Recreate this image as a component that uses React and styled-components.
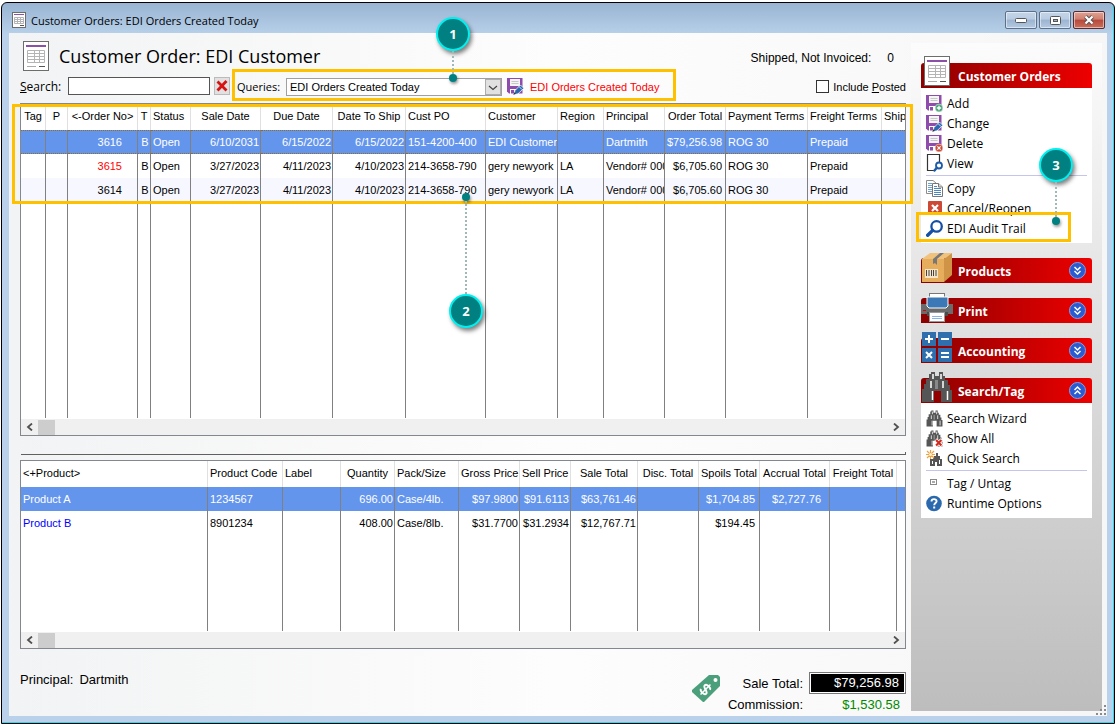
import { useState } from 'react';
import styled, { createGlobalStyle, css } from 'styled-components';


const GlobalStyle = createGlobalStyle`
  * {
    box-sizing: border-box;
  }

  body {
    margin: 0;
    background: white;
    font-family: "Liberation Sans", Arial, sans-serif;
    font-size: 11px;
    color: black;
  }

  button, input, select {
    font: inherit;
    color: inherit;
    padding: 0;
    margin: 0;
  }

  svg {
    display: block;
    flex: none;
  }
`;

const Window = styled.div`
  position: relative;
  display: flex;
  flex-direction: column;
  min-height: calc(100vh - 2px);
  margin: 2px 1px 0 1px;
  padding: 0 7px 7px 7px;
  border: 1px solid black;
  border-radius: 6px 6px 0 0;
  background: linear-gradient(to bottom, #98b4d2 0, #b9d1ea 32px, #b9d1ea 100%);
  box-shadow: inset -1px -1px 0 #35d6ee;
`;

const TitleBar = styled.header`
  display: flex;
  align-items: center;
  gap: 5px;
  height: 30px;
  padding: 4px 2px 0 3px;
  font-family: "Open Sans", "Noto Sans", sans-serif;
`;

const WindowTitle = styled.span`
  flex: 1;
`;

const WindowButtons = styled.div`
  display: flex;
  gap: 2px;
`;

const WindowButton = styled.button`
  display: flex;
  align-items: center;
  justify-content: center;
  width: 32px;
  height: 18px;
  border: 1px solid ${props => props.$close ? '#5b2a2c' : '#5f6f85'};
  border-radius: 2px;
  box-shadow: inset 0 0 0 1px rgba(255, 255, 255, 0.5);
  background: ${props => props.$close
    ? 'linear-gradient(#e0a191 0, #d08070 45%, #b8483a 50%, #c9705a 100%)'
    : 'linear-gradient(#c5d5e8 0, #b8cce2 45%, #9cb4cf 50%, #b3cae3 100%)'};
`;

const Client = styled.div`
  flex: 1;
  display: flex;
  padding: 10px 5px 5px 11px;
  background: linear-gradient(to right, #f2f3f4 0, #fdfdfd 50%, #f6f6f6 100%);
`;

const Main = styled.main`
  flex: 1;
  min-width: 0;
  display: flex;
  flex-direction: column;
  padding-right: 5px;
`;

const Heading = styled.div`
  display: flex;
  align-items: center;
  gap: 10px;
  height: 26px;
  padding: 0 12px 0 3px;

  h1 {
    flex: 1;
    margin: 0;
    font-family: "Open Sans", "Noto Sans", sans-serif;
    font-size: 18px;
    font-weight: 400;
  }
`;

const Shipped = styled.div`
  display: flex;
  gap: 16px;
  padding-top: 4px;
  font-size: 12px;
`;

const Toolbar = styled.div`
  display: flex;
  align-items: center;
  height: 32px;
  margin-bottom: 2px;
`;

const SearchForm = styled.div`
  display: flex;
  align-items: center;
  gap: 4px;
  padding-top: 2px;

  label {
    width: 44px;
    font-family: "Open Sans", "Noto Sans", sans-serif;
    font-size: 12px;
  }

  input {
    width: 142px;
    height: 18px;
    padding: 0 3px;
    border: 1px solid #555;
    background: white;
  }
`;

const ClearButton = styled.button`
  display: flex;
  align-items: center;
  justify-content: center;
  width: 16px;
  height: 18px;
  border: 1px solid #bbb;
  background: #e1e1e1;
`;

const QueryBox = styled.div`
  display: flex;
  align-items: center;
  height: 32px;
  width: 444px;
  margin-left: 2px;
  padding: 3px 2px 0 2px;
  border: 3px solid #ffc000;

  label {
    width: 49px;
    font-family: "Open Sans", "Noto Sans", sans-serif;
  }
`;

const SelectWrap = styled.div`
  position: relative;
  width: 216px;
  margin-right: 5px;

  select {
    width: 100%;
    height: 18px;
    padding: 0 18px 0 3px;
    border: 1px solid #a0a0a0;
    border-radius: 0;
    background: white;
    appearance: none;
  }

  svg {
    position: absolute;
    top: 1px;
    right: 1px;
    pointer-events: none;
  }
`;

const ActiveQuery = styled.span`
  margin-left: 6px;
  color: #f00;
`;

const Posted = styled.label`
  display: flex;
  align-items: center;
  gap: 4px;
  margin-left: auto;
  padding-top: 3px;

  input {
    appearance: none;
    width: 13px;
    height: 13px;
    border: 1px solid #333;
    background: white;
  }
`;

const GridFrame = styled.section`
  position: relative;
  display: flex;
  flex-direction: column;
  border: 1px solid #828790;
  background: white;
  ${props => props.$grow ? css`flex: 1;` : css`height: 189px;`}
`;

const TableArea = styled.div`
  flex: 1;
  display: grid;
  overflow: hidden;
  margin-bottom: 1px;
`;

const Table = styled.table`
  width: 100%;
  height: 100%;
  table-layout: fixed;
  border-collapse: separate;
  border-spacing: 0;

  th, td {
    padding: 0 2px;
    overflow: hidden;
    white-space: nowrap;
    font-weight: 400;
    border-right: 1px solid #808080;
  }

  th {
    height: 26px;
    padding: 0 2px 2px 2px;
    border-right-color: #e0e0e0;
  }

  td {
    height: 24px;
  }

  th:last-child, td:last-child {
    padding-right: 0;
    border-right: none;
  }
`;

const HeadCell = styled.th`
  text-align: ${props => props.$align === 'left' ? 'left' : 'center'};
`;

const Row = styled.tr`
  background: ${props => props.$selected ? '#6495ed' : props.$tint ? '#f7f8ff' : 'white'};
  color: ${props => props.$selected ? 'white' : 'black'};

  td {
    ${props => props.$focus && css`
      border-top: 1px dotted #9a6b12;
      border-bottom: 1px dotted #9a6b12;
    `}
  }
`;

const Cell = styled.td`
  && {
    text-align: ${props => props.$align || 'left'};
    padding-right: ${props => props.$inset ?? 0}px;
    color: ${props => props.$color || 'inherit'};
  }
`;

const Filler = styled.tr`
  && td {
    height: auto;
  }
`;

const ScrollBar = styled.div`
  display: flex;
  align-items: center;
  height: 16px;
  background: #f0f0f0;

  button {
    display: flex;
    align-items: center;
    justify-content: center;
    width: 17px;
    height: 16px;
    border: none;
    background: transparent;
  }
`;

const Thumb = styled.div`
  width: 17px;
  height: 15px;
  margin-right: auto;
  background: #cdcdcd;
`;

const Splitter = styled.div`
  height: 3px;
  margin: 16px 0 5px 1px;
  border-right: 1px solid #606060;
  border-bottom: 1px solid #606060;
`;

const Footer = styled.footer`
  display: flex;
  justify-content: space-between;
  height: 62px;
  padding-top: 23px;
  font-size: 13px;
`;

const Principal = styled.div`
  display: flex;
  gap: 6px;
`;

const Totals = styled.dl`
  display: grid;
  grid-template-columns: auto auto 97px;
  column-gap: 6px;
  align-items: center;
  margin: 0;
  text-align: right;
  grid-template-rows: 22px 20px;

  svg {
    grid-row: 1 / 3;
    align-self: start;
    margin-top: 2px;
  }

  dt, dd {
    margin: 0;
  }
`;

const SaleTotal = styled.dd`
  height: 22px;
  padding: 2px 6px 0 0;
  border: 1px solid #777;
  box-shadow: inset 0 0 0 1px white;
  background: black;
  color: white;
`;

const Commission = styled.dd`
  padding-right: 6px;
  color: #008a00;
`;

const Sidebar = styled.aside`
  display: flex;
  flex-direction: column;
  gap: 15px;
  width: 191px;
  padding: 20px 10px;
  background: linear-gradient(to bottom, #fcfcfc 0, #d8d8d8 55%, #bdbdbd 100%);
  font-family: "Open Sans", "Noto Sans", sans-serif;
  font-size: 12px;
`;

const GroupHeader = styled.button`
  display: flex;
  align-items: flex-end;
  width: 100%;
  height: 25px;
  padding-right: 6px;
  border: none;
  border-radius: 3px 3px 0 0;
  background: linear-gradient(to right, #8b0000, #ee0000);
  color: white;
  font-weight: 700;
  text-align: left;
`;

const GroupTitle = styled.span`
  flex: 1;
  margin-left: 5px;
  line-height: 22px;
`;

const Chevron = styled.span`
  margin-bottom: 4px;
`;

const GroupList = styled.ul`
  margin: 0;
  padding: 5px;
  background: white;
  list-style: none;
`;

const Item = styled.li`
  ${props => props.$divided && css`
    margin-top: 2px;
    padding-top: 2px;
    border-top: 1px solid #c3c6ea;
  `}

  button {
    display: flex;
    align-items: center;
    gap: 4px;
    width: 100%;
    height: 20px;
    border: none;
    background: none;
    text-align: left;
  }
`;

const Highlight = styled.div`
  position: absolute;
  border: 3px solid #ffc000;
  pointer-events: none;
`;

const GridHighlight = styled(Highlight)`
  top: 0;
  left: -9px;
  right: -8px;
  height: 100px;
`;

const ItemHighlight = styled(Highlight)`
  left: -5px;
  top: 149px;
  width: 155px;
  height: 30px;
`;

const GroupBody = styled.div`
  position: relative;
`;

const Callout = styled.div`
  position: absolute;
  left: ${props => props.$x}px;
  top: ${props => props.$y}px;
  display: flex;
  flex-direction: ${props => props.$up ? 'column-reverse' : 'column'};
  align-items: center;
  width: 34px;
  pointer-events: none;
`;

const Bubble = styled.span`
  display: flex;
  align-items: center;
  justify-content: center;
  width: 34px;
  height: 34px;
  border: 2px solid #00f0f0;
  border-radius: 50%;
  background: #008080;
  box-shadow: 2px 3px 4px rgba(0, 0, 0, 0.5);
  color: white;
  font-family: "Open Sans", "Noto Sans", sans-serif;
  font-size: 13px;
  font-weight: 700;
`;

const Leader = styled.span`
  height: ${props => props.$length}px;
  border-left: 2px dotted #9fb8b8;
`;

const Dot = styled.span`
  width: 8px;
  height: 8px;
  border-radius: 50%;
  background: #008080;
  box-shadow: 1px 2px 3px rgba(0, 0, 0, 0.4);
`;

const Grip = styled.svg`
  position: absolute;
  right: 7px;
  bottom: 7px;
`;


// ---- icons ----

const OrderIcon = ({ width = 26, height = 30, viewBox = '0 0 26 30' }) => (
  <svg width={width} height={height} viewBox={viewBox}>
    <rect x=".5" y=".5" width="25" height="29" fill="#fff" stroke="#6d6d6d" />
    <rect x="3" y="4" width="20" height="2" fill="#8b50a8" />
    <path d="M4.500 9.500H21.500V21.500H4.500ZM4.500 12.500H21.500M4.500 15.500H21.500M4.500 18.500H21.500M11.500 9.500V21.500M16.500 9.500V21.500" fill="none" stroke="#b4b4b4" />
    <path d="M4 25.500H13" stroke="#aaa" />
    <path d="M16 25.500H22" stroke="#555" />
  </svg>
);

const SmallOrderIcon = () => (
  <svg width="14" height="16" viewBox="0 0 14 16">
    <rect x=".5" y=".5" width="13" height="15" fill="#fff" stroke="#6d6d6d" />
    <rect x="2" y="2" width="10" height="1" fill="#8b50a8" />
    <path d="M2.500 5.500H11.500V11.500H2.500ZM2.500 7.500H11.500M2.500 9.500H11.500M5.500 5.500V11.500M8.500 5.500V11.500" fill="none" stroke="#b4b4b4" />
    <path d="M8 13.500H12" stroke="#555" />
  </svg>
);

const DiskIcon = ({ children }) => (
  <svg width="17" height="17" viewBox="0 0 17 17">
    <path d="M0 0H15.500V15.500H2L0 13.500Z" fill="#8e4dac" />
    <rect x="3" y="1" width="10" height="7" fill="#f4f4f4" />
    <path d="M4.500 3.500H11.500M4.500 5.500H11.500" stroke="#c8c8c8" />
    <rect x="3" y="11" width="9" height="5" fill="#fff" />
    <rect x="4" y="12" width="3" height="3.500" fill="#8e4dac" />
    {children}
  </svg>
);

const AddIcon = () => (
  <DiskIcon>
    <circle cx="13" cy="13" r="3.900" fill="#4aa37a" stroke="#fff" strokeWidth=".5" />
    <path d="M10.800 13H15.200M13 10.800V15.200" stroke="#fff" strokeWidth="1.300" />
  </DiskIcon>
);

const ChangeIcon = () => (
  <DiskIcon>
    <path d="M7 16.500 8 12.500 13.500 7 16.800 10.300 11 15.800Z" fill="#2b68ae" stroke="#fff" strokeWidth=".7" />
    <path d="M6.300 17 7.300 14.300 8.800 15.800Z" fill="#333" />
    <path d="M12 8.500 15 11.500" stroke="#fff" strokeWidth=".8" />
  </DiskIcon>
);

const DeleteIcon = () => (
  <DiskIcon>
    <circle cx="13" cy="13" r="3.900" fill="#cc4a35" stroke="#fff" strokeWidth=".5" />
    <path d="M11.400 11.400 14.600 14.600M14.600 11.400 11.400 14.600" stroke="#fff" strokeWidth="1.200" />
  </DiskIcon>
);

const ViewIcon = () => (
  <svg width="17" height="18" viewBox="0 0 17 18">
    <path d="M8 16.500H1.500V.5H13.500V8" fill="#fff" stroke="#333" strokeWidth="1.200" />
    <circle cx="13" cy="11.500" r="3" fill="#fff" stroke="#1d5ba6" strokeWidth="1.800" />
    <path d="M10.800 13.700 8.500 16.500" stroke="#1d5ba6" strokeWidth="2.400" strokeLinecap="round" />
  </svg>
);

const CopyIcon = () => (
  <svg width="17" height="17" viewBox="0 0 17 17">
    <path d="M.5.5H7L10.500 3.500V13.500H.5Z" fill="#fff" stroke="#8c8c8c" />
    <path d="M2 3.500H6M2 5.500H6M2 7.500H6M2 9.500H6M2 11.500H6" stroke="#6fa0ce" />
    <path d="M6.500 3.500H12.500L16.500 7V16.500H6.500Z" fill="#fff" stroke="#777" />
    <path d="M12.500 3.500V7H16.500" fill="#ddd" stroke="#777" />
    <path d="M8 6.500H11M8 8.500H15M8 10.500H15M8 12.500H15M8 14.500H15" stroke="#4a87c0" />
  </svg>
);

const CancelIcon = () => (
  <svg width="17" height="16" viewBox="0 0 17 16">
    <rect x="2" y="1" width="14" height="14" rx="1" fill="#cc4a35" />
    <path d="M6 5 12 11M12 5 6 11" stroke="#fff" strokeWidth="2.200" />
  </svg>
);

const LensIcon = () => (
  <svg width="17" height="17" viewBox="0 0 17 17">
    <circle cx="10.600" cy="6.400" r="5.200" fill="#fff" stroke="#1550a5" strokeWidth="2.300" />
    <path d="M6.600 10.400 1.700 15.300" stroke="#1550a5" strokeWidth="3.400" strokeLinecap="round" />
  </svg>
);

const BoxIcon = () => (
  <svg width="32" height="31" viewBox="0 0 32 31">
    <path d="M1 7 9 1H31L23 7Z" fill="#f0c27c" />
    <path d="M23 7 31 1V23L23 30Z" fill="#cf9445" />
    <rect x="1" y="7" width="22" height="23" fill="#e6ad5c" />
    <path d="M12 7 19 1H23L16 7V13L14 11 12 12Z" fill="#777" />
    <rect x="4" y="17" width="13" height="9" fill="#f4e3c6" />
    <path d="M5.500 18V24M8 18V24M10.500 18V24M12.500 18V24M15 18V24" stroke="#444" />
  </svg>
);

const PrintIcon = () => (
  <svg width="32" height="31" viewBox="0 0 32 31">
    <path d="M0 12H32V22H0Z" fill="#6b6b6b" />
    <rect x="8.500" y="1.500" width="15" height="6" fill="#fff" stroke="#777" />
    <path d="M6 5H27V14L25 16H8L6 14Z" fill="#3b78b5" stroke="#fff" />
    <rect x="2" y="18" width="3" height="1" fill="#d00" />
    <path d="M6 20H27V24H6Z" fill="#4b4b4b" />
    <rect x="8.500" y="20.500" width="15" height="9" fill="#fff" stroke="#999" />
    <path d="M11 24.500H21M11 26.500H21" stroke="#8db4de" />
  </svg>
);

const CalcIcon = () => (
  <svg width="32" height="32" viewBox="0 0 32 32">
    <path d="M1 1H15V15H1ZM17 1H31V15H17ZM1 17H15V31H1ZM17 17H31V31H17Z" fill="#2f6fae" />
    <path d="M4 8H12M8 4V12M20 8H28M5 21 11 27M11 21 5 27M20 22H28M20 26H28" stroke="#fff" strokeWidth="2" />
  </svg>
);

const BinocularsIcon = ({ size = 32, children }) => (
  <svg width={size} height={size} viewBox="0 0 32 32">
    <path d="M10 1H14V5H18V1H22V5H24V9H27V14H29V19H31V31H20V20H13V31H1V18H3V13H5V8H8V3H10Z" fill="#555" />
    <path d="M12 3V8M20 3V8M10 10V17M22 10V17M11.500 20V29M26.500 20V29" stroke="#fff" strokeWidth="1.500" />
    <rect x="14" y="9" width="3" height="9" fill="#888" />
    {children}
  </svg>
);

const ShowAllIcon = () => (
  <BinocularsIcon size={17}>
    <path d="M18 18 30 30M30 18 18 30" stroke="#fff" strokeWidth="7" />
    <path d="M19 19 29 29M29 19 19 29" stroke="#d02a1e" strokeWidth="4" />
  </BinocularsIcon>
);

const QuickIcon = () => (
  <svg width="17" height="17" viewBox="0 0 17 17">
    <path d="M8 6H10V3H12V6H14V9H16V16H11V12H9V16H4V9H7Z" fill="#555" />
    <path d="M6.500 11V14M13.500 10V14" stroke="#fff" />
    <path d="M4.500 0V9M0 4.500H9M1 1 8 8M8 1 1 8" stroke="#e8a445" strokeWidth="1.200" />
    <circle cx="4.500" cy="4.500" r="1.500" fill="#fff2c8" />
  </svg>
);

const TagIcon = () => (
  <svg width="17" height="17" viewBox="0 0 17 17">
    <rect x="4.500" y="4.500" width="6" height="5" fill="#fff" stroke="#8a8a8a" />
    <rect x="6" y="6.500" width="3" height="1" fill="#555" />
  </svg>
);

const HelpIcon = () => (
  <svg width="17" height="17" viewBox="0 0 17 17">
    <circle cx="8" cy="8.500" r="7.800" fill="#2a69ae" />
    <path d="M5.500 6.500C5.500 3.300 10.700 3.500 10.600 6.300C10.500 8 8.200 8.200 8.200 10.300" fill="none" stroke="#fff" strokeWidth="1.900" />
    <rect x="7.200" y="11.500" width="2" height="2" fill="#fff" />
  </svg>
);

const ToggleIcon = ({ up }) => (
  <svg width="17" height="17" viewBox="0 0 17 17">
    <circle cx="8.500" cy="8.500" r="8" fill="#2a5bd0" stroke="#7fa4ee" />
    <path
      d={up ? 'M5.500 8 8.500 5 11.500 8M5.500 12 8.500 9 11.500 12' : 'M5.500 5 8.500 8 11.500 5M5.500 9 8.500 12 11.500 9'}
      fill="none"
      stroke="#fff"
      strokeWidth="1.500"
    />
  </svg>
);

const DropIcon = () => (
  <svg width="16" height="16" viewBox="0 0 16 16">
    <rect x=".5" y=".5" width="15" height="15" fill="#e1e1e1" stroke="#adadad" />
    <path d="M4 7 8 10.500 12 7" fill="none" stroke="#444" strokeWidth="1.200" />
  </svg>
);

const ArrowIcon = ({ right }) => (
  <svg width="7" height="8" viewBox="0 0 7 8">
    <path d={right ? 'M1 .5 5 4 1 7.500' : 'M6 .5 2 4 6 7.500'} fill="none" stroke="#505050" strokeWidth="1.800" />
  </svg>
);

const PriceTagIcon = () => (
  <svg width="30" height="30" viewBox="0 0 30 30">
    <path d="M17 1H26L28 3V12L12 28H11L0 18V16Z" fill="#4c9f7b" />
    <circle cx="23.500" cy="6" r="2" fill="#fff" />
    <g transform="translate(13.500 15.500) rotate(45)" fill="none" stroke="#fff" strokeWidth="1.900">
      <path d="M3.500-3C2.500-5.200-3.500-5.200-3.500-2.300C-3.500.5 3.500-.5 3.500 2.400C3.500 5.200-2.800 5.200-3.800 2.800" />
      <path d="M0-7V7" strokeWidth="1.500" />
    </g>
  </svg>
);


// ---- data ----

const orderColumns = [
  { key: 'tag', label: 'Tag', width: 25 },
  { key: 'p', label: 'P', width: 22 },
  { key: 'no', label: '<-Order No>', width: 70, data: 'right', inset: 15 },
  { key: 't', label: 'T', width: 13, data: 'center' },
  { key: 'status', label: 'Status', width: 40, head: 'left' },
  { key: 'sale', label: 'Sale Date', width: 70, data: 'right', inset: 1 },
  { key: 'due', label: 'Due Date', width: 72, data: 'right', inset: 1 },
  { key: 'ship', label: 'Date To Ship', width: 73, data: 'right', inset: 1 },
  { key: 'po', label: 'Cust PO', width: 80, head: 'left' },
  { key: 'customer', label: 'Customer', width: 72, head: 'left' },
  { key: 'region', label: 'Region', width: 46, head: 'left' },
  { key: 'principal', label: 'Principal', width: 61, head: 'left' },
  { key: 'total', label: 'Order Total', width: 61, data: 'right', inset: 3 },
  { key: 'terms', label: 'Payment Terms', width: 82, head: 'left' },
  { key: 'freight', label: 'Freight Terms', width: 74, head: 'left' },
  { key: 'via', label: 'Ship', head: 'left' },
];

const orders = [
  { no: '3616', t: 'B', status: 'Open', sale: '6/10/2031', due: '6/15/2022', ship: '6/15/2022', po: '151-4200-400', customer: 'EDI Customer', region: '', principal: 'Dartmith', total: '$79,256.98', terms: 'ROG 30', freight: 'Prepaid' },
  { no: '3615', t: 'B', status: 'Open', sale: '3/27/2023', due: '4/11/2023', ship: '4/10/2023', po: '214-3658-790', customer: 'gery newyork', region: 'LA', principal: 'Vendor# 0001', total: '$6,705.60', terms: 'ROG 30', freight: 'Prepaid', colors: { no: '#f00' } },
  { no: '3614', t: 'B', status: 'Open', sale: '3/27/2023', due: '4/11/2023', ship: '4/10/2023', po: '214-3658-790', customer: 'gery newyork', region: 'LA', principal: 'Vendor# 0001', total: '$6,705.60', terms: 'ROG 30', freight: 'Prepaid' },
];

const productColumns = [
  { key: 'name', label: '<+Product>', width: 187, head: 'left' },
  { key: 'code', label: 'Product Code', width: 75, head: 'left' },
  { key: 'label', label: 'Label', width: 58, head: 'left' },
  { key: 'qty', label: 'Quantity', width: 54, data: 'right', inset: 1 },
  { key: 'pack', label: 'Pack/Size', width: 64, head: 'left' },
  { key: 'gross', label: 'Gross Price', width: 61, data: 'right', inset: 1 },
  { key: 'sell', label: 'Sell Price', width: 51, data: 'right', inset: 1 },
  { key: 'sale', label: 'Sale Total', width: 67, data: 'right', inset: 1 },
  { key: 'disc', label: 'Disc. Total', width: 61 },
  { key: 'spoils', label: 'Spoils Total', width: 61, data: 'right', inset: 4 },
  { key: 'accrual', label: 'Accrual Total', width: 70, data: 'right', inset: 8 },
  { key: 'freight', label: 'Freight Total', width: 67 },
  { key: 'more', label: '' },
];

const products = [
  { name: 'Product A', code: '1234567', qty: '696.00', pack: 'Case/4lb.', gross: '$97.9800', sell: '$91.6113', sale: '$63,761.46', spoils: '$1,704.85', accrual: '$2,727.76' },
  { name: 'Product B', code: '8901234', qty: '408.00', pack: 'Case/8lb.', gross: '$31.7700', sell: '$31.2934', sale: '$12,767.71', spoils: '$194.45', colors: { name: '#00f' } },
];

const orderActions = [
  { label: 'Add', icon: AddIcon },
  { label: 'Change', icon: ChangeIcon },
  { label: 'Delete', icon: DeleteIcon },
  { label: 'View', icon: ViewIcon },
  { label: 'Copy', icon: CopyIcon, divided: true },
  { label: 'Cancel/Reopen', icon: CancelIcon },
  { label: 'EDI Audit Trail', icon: LensIcon },
];

const SmallBinoculars = () => <BinocularsIcon size={17} />;

const searchActions = [
  { label: 'Search Wizard', icon: SmallBinoculars },
  { label: 'Show All', icon: ShowAllIcon },
  { label: 'Quick Search', icon: QuickIcon },
  { label: 'Tag / Untag', icon: TagIcon, divided: true },
  { label: 'Runtime Options', icon: HelpIcon },
];


const DataGrid = ({ columns, rows, grow, focus, children }) => {
  const [selected, setSelected] = useState(0);

  return (
    <GridFrame $grow={grow}>
      <TableArea>
        <Table>
          <colgroup>
            {columns.map(col => <col key={col.key} width={col.width} />)}
          </colgroup>
          <thead>
            <tr>
              {columns.map(col => (
                <HeadCell key={col.key} $align={col.head}>{col.label}</HeadCell>
              ))}
            </tr>
          </thead>
          <tbody>
            {rows.map((row, i) => (
              <Row
                key={i}
                $selected={selected === i}
                $focus={focus && selected === i}
                $tint={focus && i % 2 === 0}
                onClick={() => setSelected(i)}
              >
                {columns.map(col => (
                  <Cell
                    key={col.key}
                    $align={col.data}
                    $inset={col.inset}
                    $color={selected !== i && row.colors ? row.colors[col.key] : undefined}
                  >
                    {row[col.key]}
                  </Cell>
                ))}
              </Row>
            ))}
            <Filler aria-hidden="true">
              {columns.map(col => <td key={col.key} />)}
            </Filler>
          </tbody>
        </Table>
      </TableArea>
      <ScrollBar>
        <button aria-label="Scroll left"><ArrowIcon /></button>
        <Thumb />
        <button aria-label="Scroll right"><ArrowIcon right /></button>
      </ScrollBar>
      {children}
    </GridFrame>
  );
};

const Group = ({ title, icon, items, fixed, children }) => (
  <GroupBody>
    <GroupHeader>
      {icon}
      <GroupTitle>{title}</GroupTitle>
      {!fixed && <Chevron><ToggleIcon up={!!items} /></Chevron>}
    </GroupHeader>
    {items && (
      <GroupList>
        {items.map(({ label, icon: Icon, divided }) => (
          <Item key={label} $divided={divided}>
            <button><Icon />{label}</button>
          </Item>
        ))}
      </GroupList>
    )}
    {children}
  </GroupBody>
);


const App = () => {
  const [search, setSearch] = useState('');
  const [posted, setPosted] = useState(false);

  return (
    <>
      <GlobalStyle />
      <Window>
        <TitleBar>
          <SmallOrderIcon />
          <WindowTitle>Customer Orders: EDI Orders Created Today</WindowTitle>
          <WindowButtons>
            <WindowButton aria-label="Minimize">
              <svg width="12" height="5" viewBox="0 0 12 5"><rect x=".5" y=".5" width="11" height="4" rx="1" fill="#fff" stroke="#555" /></svg>
            </WindowButton>
            <WindowButton aria-label="Maximize">
              <svg width="11" height="9" viewBox="0 0 11 9">
                <rect x=".5" y=".5" width="10" height="8" rx="1" fill="#fff" stroke="#555" />
                <rect x="3.500" y="3.500" width="4" height="2" fill="#9cb4cf" stroke="#555" />
              </svg>
            </WindowButton>
            <WindowButton $close aria-label="Close">
              <svg width="12" height="10" viewBox="0 0 12 10">
                <path d="M2.500 1.500 9.500 8.500M9.500 1.500 2.500 8.500" stroke="#555" strokeWidth="4" />
                <path d="M2.500 1.500 9.500 8.500M9.500 1.500 2.500 8.500" stroke="#fff" strokeWidth="2.200" />
              </svg>
            </WindowButton>
          </WindowButtons>
        </TitleBar>

        <Client>
          <Main>
            <Heading>
              <OrderIcon />
              <h1>Customer Order: EDI Customer</h1>
              <Shipped><span>Shipped, Not Invoiced:</span><span>0</span></Shipped>
            </Heading>

            <Toolbar>
              <SearchForm>
                <label htmlFor="search"><u>S</u>earch:</label>
                <input id="search" value={search} onChange={e => setSearch(e.target.value)} />
                <ClearButton aria-label="Clear search" onClick={() => setSearch('')}>
                  <svg width="12" height="12" viewBox="0 0 12 12">
                    <path d="M1.500 1.500 10.500 10.500M10.500 1 1.500 10.500" stroke="#d81313" strokeWidth="2.800" />
                  </svg>
                </ClearButton>
              </SearchForm>
              <QueryBox>
                <label htmlFor="query">Queries:</label>
                <SelectWrap>
                  <select id="query">
                    <option>EDI Orders Created Today</option>
                  </select>
                  <DropIcon />
                </SelectWrap>
                <ChangeIcon />
                <ActiveQuery>EDI Orders Created Today</ActiveQuery>
              </QueryBox>
              <Posted>
                <input type="checkbox" checked={posted} onChange={e => setPosted(e.target.checked)} />
                <span>Include <u>P</u>osted</span>
              </Posted>
            </Toolbar>

            <DataGrid columns={orderColumns} rows={orders} grow focus>
              <GridHighlight />
            </DataGrid>
            <Splitter />
            <DataGrid columns={productColumns} rows={products} />

            <Footer>
              <Principal><span>Principal:</span><span>Dartmith</span></Principal>
              <Totals>
                <PriceTagIcon />
                <dt>Sale Total:</dt>
                <SaleTotal>$79,256.98</SaleTotal>
                <dt>Commission:</dt>
                <Commission>$1,530.58</Commission>
              </Totals>
            </Footer>
          </Main>

          <Sidebar>
            <Group title="Customer Orders" icon={<OrderIcon width={32} height={32} viewBox="-3 0 32 32" />} items={orderActions} fixed>
              <ItemHighlight />
            </Group>
            <Group title="Products" icon={<BoxIcon />} />
            <Group title="Print" icon={<PrintIcon />} />
            <Group title="Accounting" icon={<CalcIcon />} />
            <Group title="Search/Tag" icon={<BinocularsIcon />} items={searchActions} />
          </Sidebar>
        </Client>

        <Callout $x={434} $y={14}>
          <Bubble>1</Bubble>
          <Leader $length={23} />
          <Dot />
        </Callout>
        <Callout $x={447} $y={190} $up>
          <Bubble>2</Bubble>
          <Leader $length={93} />
          <Dot />
        </Callout>
        <Callout $x={1037} $y={145}>
          <Bubble>3</Bubble>
          <Leader $length={35} />
          <Dot />
        </Callout>

        <Grip width="12" height="12" viewBox="0 0 12 12">
          <path d="M9 1H11V3H9ZM9 5H11V7H9ZM5 5H7V7H5ZM9 9H11V11H9ZM5 9H7V11H5ZM1 9H3V11H1Z" fill="#8a8a8a" />
        </Grip>
      </Window>
    </>
  );
};

export default App
